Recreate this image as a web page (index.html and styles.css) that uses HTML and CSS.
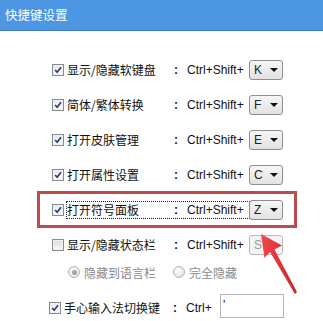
FILE: index.html
```html
<!DOCTYPE html>
<html>
<head>
<meta charset="utf-8">
<link rel="stylesheet" href="styles.css">
</head>
<body>
<div class="header">快捷键设置</div>
<div class="content">
  <div class="row">
    <span class="cb on"><svg width="12" height="12" viewBox="0 0 12 12"><path d="M2.5 6 L5 8.6 L9.6 2.8" fill="none" stroke="#2a3f7a" stroke-width="2"/></svg></span>
    <span class="label">显示/隐藏软键盘</span><span class="colon">:</span><span class="ctrl">Ctrl+Shift+</span>
    <span class="sel"><span class="key">K</span><span class="tri"></span></span>
  </div>
  <div class="row">
    <span class="cb on"><svg width="12" height="12" viewBox="0 0 12 12"><path d="M2.5 6 L5 8.6 L9.6 2.8" fill="none" stroke="#2a3f7a" stroke-width="2"/></svg></span>
    <span class="label">简体/繁体转换</span><span class="colon">:</span><span class="ctrl">Ctrl+Shift+</span>
    <span class="sel"><span class="key">F</span><span class="tri"></span></span>
  </div>
  <div class="row">
    <span class="cb on"><svg width="12" height="12" viewBox="0 0 12 12"><path d="M2.5 6 L5 8.6 L9.6 2.8" fill="none" stroke="#2a3f7a" stroke-width="2"/></svg></span>
    <span class="label">打开皮肤管理</span><span class="colon">:</span><span class="ctrl">Ctrl+Shift+</span>
    <span class="sel"><span class="key">E</span><span class="tri"></span></span>
  </div>
  <div class="row">
    <span class="cb on"><svg width="12" height="12" viewBox="0 0 12 12"><path d="M2.5 6 L5 8.6 L9.6 2.8" fill="none" stroke="#2a3f7a" stroke-width="2"/></svg></span>
    <span class="label">打开属性设置</span><span class="colon">:</span><span class="ctrl">Ctrl+Shift+</span>
    <span class="sel"><span class="key">C</span><span class="tri"></span></span>
  </div>
  <div class="row">
    <span class="cb on"><svg width="12" height="12" viewBox="0 0 12 12"><path d="M2.5 6 L5 8.6 L9.6 2.8" fill="none" stroke="#2a3f7a" stroke-width="2"/></svg></span>
    <span class="focus"><span class="label">打开符号面板</span><span class="colon">:</span><span class="ctrl">Ctrl+Shift+</span></span>
    <span class="sel"><span class="key">Z</span><span class="tri"></span></span>
  </div>
  <div class="row">
    <span class="cb"></span>
    <span class="label">显示/隐藏状态栏</span><span class="colon">:</span><span class="ctrl">Ctrl+Shift+</span>
    <span class="sel dis"><span class="key">S</span><span class="tri"></span></span>
  </div>
  <div class="radios">
    <span class="radio"><span class="dot"></span></span><span class="rtext">隐藏到语言栏</span>
    <span class="radio r2"></span><span class="rtext">完全隐藏</span>
  </div>
  <div class="row last">
    <span class="cb on"><svg width="12" height="12" viewBox="0 0 12 12"><path d="M2.5 6 L5 8.6 L9.6 2.8" fill="none" stroke="#2a3f7a" stroke-width="2"/></svg></span>
    <span class="label wide">手心输入法切换键</span><span class="colon">:</span><span class="ctrl short">Ctrl+</span>
    <span class="input">'</span>
  </div>
</div>
<div class="highlight"></div>
<svg class="arrow" width="323" height="321" viewBox="0 0 323 321">
  <defs>
    <linearGradient id="ag" x1="0" y1="0" x2="1" y2="0">
      <stop offset="0" stop-color="#f0484a"/>
      <stop offset="1" stop-color="#c8262c"/>
    </linearGradient>
  </defs>
  <polygon points="261,234 282,245.5 274.5,249.5 297,292 295,294 270,252 264.5,258" fill="url(#ag)"/>
</svg>
</body>
</html>
```

FILE: styles.css
```css
html, body {
  margin: 0;
  padding: 0;
  background: #ffffff;
  width: 323px;
  height: 321px;
  overflow: hidden;
}
body {
  font-family: "Noto Sans CJK SC", "Liberation Sans", sans-serif;
  font-size: 12px;
  color: #111;
  position: relative;
}
.header {
  height: 30px;
  background: #4d96e2;
  border-bottom: 1px solid #3b7ac0;
  color: #fff;
  font-size: 12.5px;
  line-height: 30px;
  padding-left: 5px;
  box-sizing: content-box;
}
.content {
  padding-top: 21px;
  padding-left: 52px;
}
.row {
  height: 35px;
  display: flex;
  align-items: center;
}
.cb {
  width: 10px;
  height: 10px;
  border: 1px solid #8b8b8b;
  background: linear-gradient(#dcdcdc, #f8f8f8);
  box-shadow: inset 0 0 0 1px #f2f2f2;
  display: flex;
  align-items: center;
  justify-content: center;
  margin-right: 3px;
  flex: none;
}
.cb svg { display: block; }
.cb.on { background: linear-gradient(#e4e8f0, #ffffff); }
.label {
  width: 107px;
  white-space: nowrap;
  line-height: 16px;
}
.label.wide { width: 109px; }
.colon {
  width: 13px;
  font-family: "Liberation Sans", sans-serif;
  font-weight: bold;
  font-size: 12px;
}
.ctrl {
  width: 62px;
  font-family: "Liberation Sans", sans-serif;
  font-size: 12px;
  white-space: nowrap;
}
.ctrl.short { width: 34px; }
.focus {
  display: flex;
  align-items: center;
  outline: 1px dotted #222;
  outline-offset: 0px;
  height: 16px;
}
.focus .ctrl { width: 57px; margin-right: 5px; }
.sel {
  height: 18px;
  border: 1px solid #8e8e8e;
  border-radius: 3px;
  background: linear-gradient(#f6f6f6, #e2e2e2);
  display: flex;
  align-items: center;
  justify-content: space-between;
  padding: 0 4px 0 4px;
  box-sizing: content-box;
  width: 24px;
}
.key {
  font-family: "Liberation Sans", sans-serif;
  font-size: 12px;
  color: #222;
}
.tri {
  width: 0;
  height: 0;
  border-left: 4px solid transparent;
  border-right: 4px solid transparent;
  border-top: 4px solid #111;
  margin-top: 1px;
}
.sel.dis { border-color: #b8b8b8; background: #f4f4f4; }
.sel.dis .key { color: #999; }
.sel.dis .tri { border-top-color: #aaa; }
.radios {
  height: 20px;
  display: flex;
  align-items: center;
  padding-left: 16px;
  color: #8c8c8c;
}
.radio {
  width: 10px;
  height: 10px;
  border: 1px solid #b5b5b5;
  border-radius: 50%;
  background: radial-gradient(circle at 40% 35%, #fcfcfc, #dedede);
  display: flex;
  align-items: center;
  justify-content: center;
  margin-right: 4px;
  flex: none;
}
.dot {
  width: 5px;
  height: 5px;
  border-radius: 50%;
  background: #a6a6a6;
}
.r2 { margin-left: 17px; }
.rtext { white-space: nowrap; }
.row.last {
  margin-top: 8px;
  margin-left: -3px;
}
.input {
  width: 64px;
  height: 24px;
  border: 1px solid #b4b4b4;
  background: #fff;
  font-family: "Liberation Sans", sans-serif;
  font-size: 12px;
  line-height: 20px;
  padding-left: 2px;
  box-sizing: border-box;
  align-self: flex-start;
  margin-top: 4px;
}
.highlight {
  position: absolute;
  left: 37px;
  top: 191px;
  width: 254px;
  height: 31px;
  border: 3px solid #be4b50;
}
.arrow {
  position: absolute;
  left: 0;
  top: 0;
  pointer-events: none;
}
```
